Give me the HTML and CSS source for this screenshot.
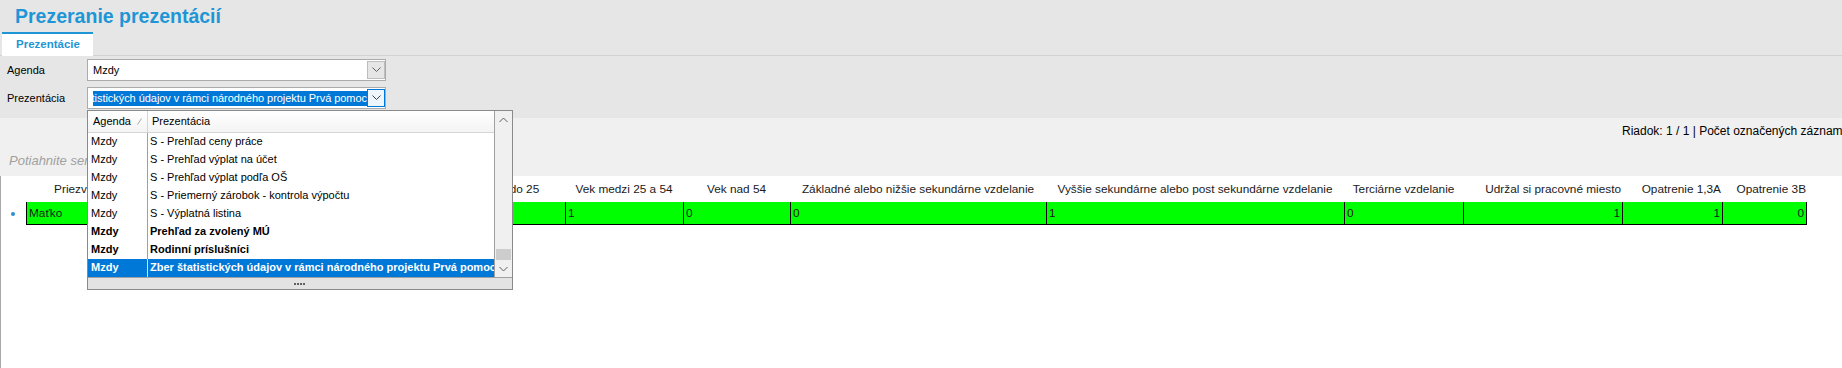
FILE: index.html
```html
<!DOCTYPE html>
<html lang="sk">
<head>
<meta charset="utf-8">
<title>Prezeranie prezentácií</title>
<link rel="stylesheet" href="styles.css">
</head>
<body>
<div class="header">
  <div class="title">Prezeranie prezentácií</div>
  <div class="tabbar"><div class="tab">Prezentácie</div></div>
</div>
<div class="filters">
  <div class="frow">
    <div class="flabel">Agenda</div>
    <div class="combo">
      <div class="combo-text">Mzdy</div>
      <div class="combo-btn"><svg width="9" height="6" viewBox="0 0 9 6"><polyline points="0.5,0.5 4.5,4.5 8.5,0.5" fill="none" stroke="#606060" stroke-width="1"/></svg></div>
    </div>
  </div>
  <div class="frow">
    <div class="flabel">Prezentácia</div>
    <div class="combo">
      <div class="combo-text sel-wrap"><span class="sel">Zber štatistických údajov v rámci národného projektu Prvá pomoc</span></div>
      <div class="combo-btn active"><svg width="9" height="6" viewBox="0 0 9 6"><polyline points="0.5,0.5 4.5,4.5 8.5,0.5" fill="none" stroke="#404040" stroke-width="1"/></svg></div>
    </div>
  </div>
</div>
<div class="status"><span class="status-text">Riadok: 1 / 1 | Počet označených záznamov: 0</span></div>
<div class="grouppanel">Potiahnite sem hlavičku stĺpca pre zoskupenie podľa tohto stĺpca</div>
<div class="grid">
  <div class="grow ghead">
    <div class="hcell"></div>
    <div class="hcell">Priezvisko</div>
    <div class="hcell">Meno</div>
    <div class="hcell">Titul</div>
    <div class="hcell">Dátum narodenia</div>
    <div class="hcell">Vek do 25</div>
    <div class="hcell">Vek medzi 25 a 54</div>
    <div class="hcell">Vek nad 54</div>
    <div class="hcell">Základné alebo nižšie sekundárne vzdelanie</div>
    <div class="hcell">Vyššie sekundárne alebo post sekundárne vzdelanie</div>
    <div class="hcell">Terciárne vzdelanie</div>
    <div class="hcell num">Udržal si pracovné miesto</div>
    <div class="hcell num">Opatrenie 1,3A</div>
    <div class="hcell num">Opatrenie 3B</div>
  </div>
  <div class="grow gdata">
    <div class="indicator"><span class="dot"></span></div>
    <div class="dcell">Maťko</div>
    <div class="dcell">Ján</div>
    <div class="dcell"></div>
    <div class="dcell">12.03.1975</div>
    <div class="dcell">0</div>
    <div class="dcell">1</div>
    <div class="dcell">0</div>
    <div class="dcell">0</div>
    <div class="dcell">1</div>
    <div class="dcell">0</div>
    <div class="dcell num">1</div>
    <div class="dcell num">1</div>
    <div class="dcell num last">0</div>
  </div>
</div>

<div class="popup">
  <div class="pop-body">
    <div class="pop-list">
      <div class="pop-head">
        <div class="ph-agenda">Agenda<svg class="sort" width="5" height="7" viewBox="0 0 5 7"><line x1="0.5" y1="6.5" x2="4.5" y2="0.5" stroke="#a8a8a8" stroke-width="1"/></svg></div>
        <div class="ph-prez">Prezentácia</div>
      </div>
      <div class="pop-row"><div class="pr-agenda">Mzdy</div><div class="pr-prez">S - Prehľad ceny práce</div></div>
      <div class="pop-row"><div class="pr-agenda">Mzdy</div><div class="pr-prez">S - Prehľad výplat na účet</div></div>
      <div class="pop-row"><div class="pr-agenda">Mzdy</div><div class="pr-prez">S - Prehľad výplat podľa OŠ</div></div>
      <div class="pop-row"><div class="pr-agenda">Mzdy</div><div class="pr-prez">S - Priemerný zárobok - kontrola výpočtu</div></div>
      <div class="pop-row"><div class="pr-agenda">Mzdy</div><div class="pr-prez">S - Výplatná listina</div></div>
      <div class="pop-row bold"><div class="pr-agenda">Mzdy</div><div class="pr-prez">Prehľad za zvolený MÚ</div></div>
      <div class="pop-row bold"><div class="pr-agenda">Mzdy</div><div class="pr-prez">Rodinní príslušníci</div></div>
      <div class="pop-row bold selected"><div class="pr-agenda">Mzdy</div><div class="pr-prez">Zber štatistických údajov v rámci národného projektu Prvá pomoc</div></div>
    </div>
    <div class="pop-scroll">
      <div class="sb-btn"><svg width="9" height="6" viewBox="0 0 9 6"><polyline points="0.5,5 4.5,1 8.5,5" fill="none" stroke="#606060" stroke-width="1"/></svg></div>
      <div class="sb-track"><div class="sb-thumb"></div></div>
      <div class="sb-btn"><svg width="9" height="6" viewBox="0 0 9 6"><polyline points="0.5,1 4.5,5 8.5,1" fill="none" stroke="#606060" stroke-width="1"/></svg></div>
    </div>
  </div>
  <div class="pop-foot"><svg width="12" height="3" viewBox="0 0 12 3"><rect x="0" y="1" width="2" height="2" fill="#606060"/><rect x="3" y="1" width="2" height="2" fill="#606060"/><rect x="6" y="1" width="2" height="2" fill="#606060"/><rect x="9" y="1" width="2" height="2" fill="#606060"/></svg></div>
</div>
</body>
</html>
```
FILE: styles.css
```css
* { box-sizing: border-box; }

body {
  margin: 0;
  width: 1842px;
  height: 368px;
  overflow: hidden;
  position: relative;
  background: #f0f0f0;
  font-family: "Liberation Sans", Arial, sans-serif;
  font-size: 11px;
  color: #000;
}

.header {
  background: #e6e6e6;
  height: 56px;
  border-bottom: 1px solid #d2d2d2;
}

.title {
  height: 32px;
  line-height: 32px;
  padding-left: 15px;
  font-weight: bold;
  font-size: 19.5px;
  color: #1e96d6;
}

.tabbar {
  height: 23px;
  display: flex;
  align-items: flex-end;
  padding-left: 2px;
}

.tab {
  width: 91px;
  height: 24px;
  margin-bottom: -1px;
  border-top: 2px solid #1e96d6;
  background: #fff;
  padding-left: 14px;
  line-height: 21px;
  font-weight: bold;
  font-size: 11.5px;
  color: #1e96d6;
}

.filters {
  background: #e6e6e6;
  height: 62px;
  padding: 3px 0 0 7px;
}

.frow {
  display: flex;
  align-items: center;
  height: 22px;
  margin-bottom: 6px;
}

.flabel {
  width: 80px;
}

.combo {
  width: 299px;
  height: 22px;
  border: 1px solid #ababab;
  background: #fff;
  display: flex;
  align-items: center;
}

.combo-text {
  flex: 1;
  margin-left: 5px;
  line-height: 20px;
  white-space: nowrap;
  overflow: hidden;
}

.sel-wrap {
  display: flex;
  justify-content: flex-end;
  align-items: center;
}

.sel {
  flex-shrink: 0;
  background: #0078d7;
  color: #fff;
  line-height: 15px;
  letter-spacing: -0.05px;
}

.combo-btn {
  width: 18px;
  height: 18px;
  border: 1px solid #bdbdbd;
  background: #e6e6e6;
  display: flex;
  align-items: center;
  justify-content: center;
}

.combo-btn.active {
  border-color: #0078d7;
  background: #eef5fc;
}

.status {
  height: 25px;
  display: flex;
  justify-content: flex-end;
  align-items: center;
  font-size: 12px;
}

.status-text {
  width: 220px;
  overflow: hidden;
  white-space: nowrap;
}

.grouppanel {
  height: 33px;
  padding: 10px 0 0 9px;
  font-style: italic;
  font-size: 13px;
  line-height: 16px;
  color: #a0a0a0;
  white-space: nowrap;
}

.grid {
  height: 192px;
  background: #fff;
  border-left: 1px solid #a8a8a8;
}

.grow {
  display: grid;
  grid-template-columns: 25px 110px 110px 110px 105px 104px 118px 107px 256px 298px 119px 159px 100px 85px;
}

.ghead {
  height: 26px;
}

.hcell {
  text-align: center;
  line-height: 26px;
  white-space: nowrap;
  overflow: hidden;
  font-size: 11.8px;
  color: #1a1a1a;
}

.hcell.num {
  text-align: right;
  padding-right: 1px;
}

.gdata {
  height: 23px;
}

.indicator {
  display: flex;
  align-items: center;
  padding-left: 10px;
}

.dot {
  width: 4px;
  height: 4px;
  border-radius: 50%;
  background: #2d8fd0;
}

.dcell {
  background: #00ff00;
  border-left: 1px solid #000;
  border-bottom: 1px solid #000;
  line-height: 22px;
  padding: 0 2px;
  white-space: nowrap;
  overflow: hidden;
  font-size: 11.8px;
  color: #1a1a1a;
}

.dcell.num {
  text-align: right;
}

.dcell.last {
  border-right: 1px solid #000;
}

/* dropdown popup overlay */
.popup {
  position: absolute;
  left: 87px;
  top: 110px;
  width: 426px;
  border: 1px solid #8a8a8a;
  background: #fff;
  display: flex;
  flex-direction: column;
}

.pop-body {
  display: flex;
}

.pop-list {
  width: 407px;
  border-right: 1px solid #a0a0a0;
}

.pop-head {
  display: flex;
  height: 22px;
  border-bottom: 1px solid #d5d5d5;
  background: linear-gradient(#ffffff, #f4f4f4);
  line-height: 21px;
}

.ph-agenda {
  width: 60px;
  border-right: 1px solid #d5d5d5;
  padding-left: 5px;
  display: flex;
  align-items: center;
}

.sort {
  margin-left: 6px;
}

.ph-prez {
  flex: 1;
  padding-left: 4px;
}

.pop-row {
  display: flex;
  height: 18px;
  line-height: 17px;
}

.pr-agenda {
  width: 60px;
  border-right: 1px solid #a0a0a0;
  padding-left: 3px;
}

.pr-prez {
  flex: 1;
  padding-left: 2px;
  white-space: nowrap;
  overflow: hidden;
}

.pop-row.bold {
  font-weight: bold;
}

.pop-row.selected {
  background: #0078d7;
  color: #fff;
}

.pop-row.selected .pr-agenda {
  border-right-color: #cfe3f5;
}

.pop-scroll {
  width: 17px;
  background: #f0f0f0;
  display: flex;
  flex-direction: column;
}

.sb-btn {
  height: 17px;
  display: flex;
  align-items: center;
  justify-content: center;
}

.sb-track {
  flex: 1;
  display: flex;
  flex-direction: column;
  justify-content: flex-end;
  align-items: center;
}

.sb-thumb {
  width: 15px;
  height: 11px;
  background: #cdcdcd;
}

.pop-foot {
  height: 12px;
  border-top: 1px solid #a0a0a0;
  background: #e3e3e3;
  display: flex;
  justify-content: center;
  align-items: center;
}
```
